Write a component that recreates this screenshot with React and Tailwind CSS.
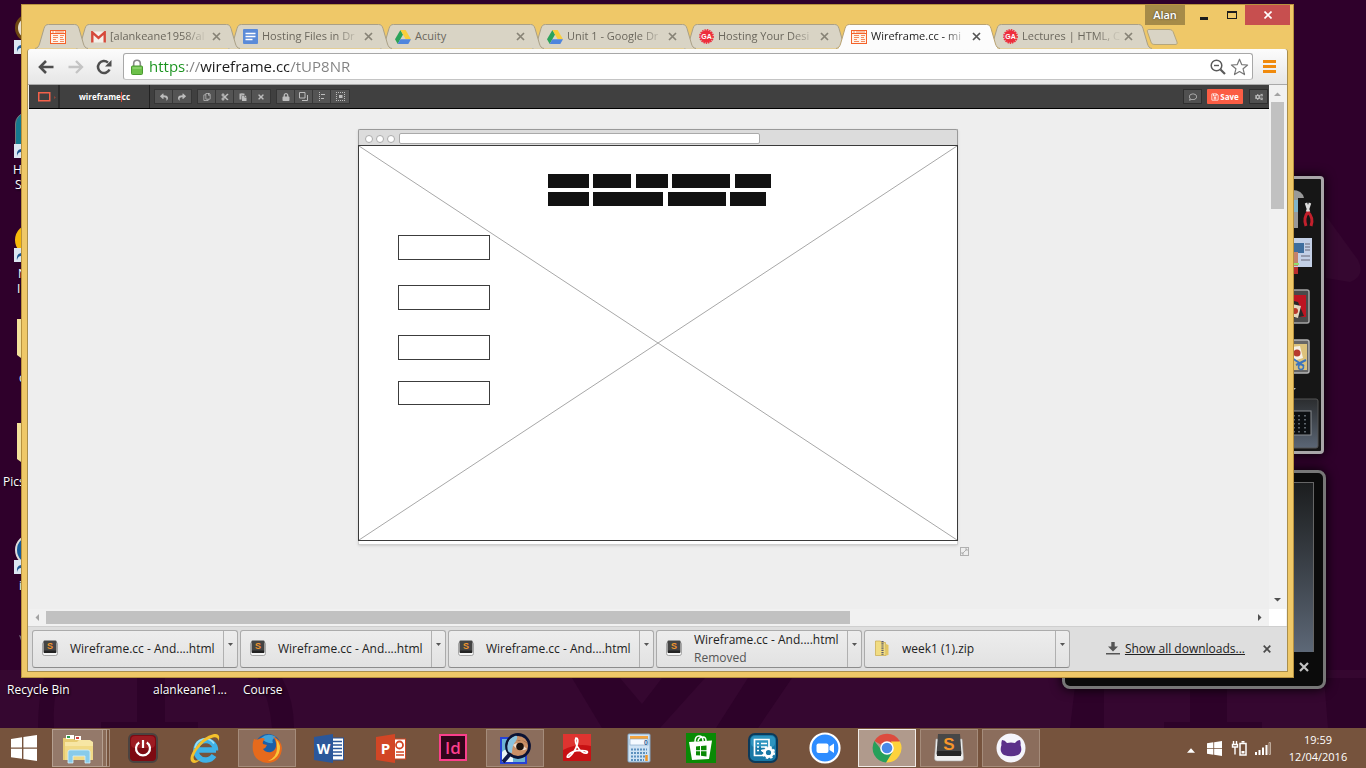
import React from "react";
import {
  FaReply, FaShare, FaRegCopy, FaCut, FaPaste, FaTimes, FaLock,
  FaRegComment, FaRegSave, FaCogs,
} from "react-icons/fa";

/* ---------- favicons ---------- */

function WireIcon() {
  return (
    <svg width="16" height="14" viewBox="0 0 16 14" className="shrink-0">
      <rect x="0.5" y="0.5" width="15" height="13" fill="#fff3ea" stroke="#f4622a" />
      <path d="M1 3.5H15" stroke="#f4622a" />
      <path d="M2 2h2M5 2h9" stroke="#f58a5c" />
      <path d="M3 5.500h5M3 7.500h5M3 9.500h3M3 11.500h5M10 5.500h4M10 7.500h3M10 9.500h4M10 11.500h4" stroke="#f58a5c" />
    </svg>
  );
}

function GmailIcon() {
  return (
    <svg width="15" height="12" viewBox="0 0 15 12" className="shrink-0">
      <rect x="1" y="0.5" width="13" height="11" fill="#f4f0ea" />
      <path d="M1.3 11.6V1.4L7.5 6.8 13.7 1.4V11.6" fill="none" stroke="#d64a3b" strokeWidth="2.4" />
    </svg>
  );
}

function DocsIcon() {
  return (
    <svg width="15" height="15" viewBox="0 0 15 15" className="shrink-0">
      <rect width="15" height="15" rx="1" fill="#5b8bd8" />
      <path d="M2.5 4.5h10M2.5 7.5h10M2.5 10.5h7" stroke="#fff" strokeWidth="1.4" />
    </svg>
  );
}

function DriveIcon() {
  return (
    <svg width="16" height="14" viewBox="0 0 16 14" className="shrink-0">
      <path d="M5.4 0L8 4.6 2.7 14 0 9.3Z" fill="#2ba35a" />
      <path d="M5.4 0H10.6L16 9.3H10.7Z" fill="#f9ce3c" />
      <path d="M5.4 9.3H16L13.3 14H2.7Z" fill="#4f85dd" />
    </svg>
  );
}

function GaIcon() {
  return (
    <svg width="15" height="15" viewBox="0 0 15 15" className="shrink-0">
      <circle cx="7.5" cy="7.5" r="6.2" fill="#ee2d3c" />
      <circle cx="7.5" cy="7.5" r="6.6" fill="none" stroke="#ee2d3c" strokeWidth="1.6" strokeDasharray="1.5 .9" />
      <text x="7.5" y="10" textAnchor="middle" fontSize="7" fontWeight="700" fill="#fff" fontFamily="Liberation Sans, sans-serif">GA</text>
    </svg>
  );
}

/* ---------- browser tabs ---------- */

const TABS = [
  { icon: <GmailIcon />, title: "[alankeane1958/al", z: "z-[7]" },
  { icon: <DocsIcon />, title: "Hosting Files in Dr", z: "z-[6]" },
  { icon: <DriveIcon />, title: "Acuity", z: "z-[5]" },
  { icon: <DriveIcon />, title: "Unit 1 - Google Dr", z: "z-[4]" },
  { icon: <GaIcon />, title: "Hosting Your Desi", z: "z-[3]" },
  { icon: <WireIcon />, title: "Wireframe.cc - mi", active: true, z: "z-10" },
  { icon: <GaIcon />, title: "Lectures | HTML, C", z: "z-[1]" },
];

function TabShape({ w, active }) {
  const d = `M0 24.5C3 24 3.500 22.500 4.500 20L9 4.500C10 1.500 11 0.500 13.500 0.500H${w - 13.5}C${w - 11} 0.500 ${w - 10} 1.500 ${w - 9} 4.500L${w - 4.5} 20C${w - 3.5} 22.500 ${w - 3} 24 ${w} 24.500`;
  return (
    <svg className="absolute inset-0" width={w} height="25" viewBox={`0 0 ${w} 25`}>
      <path d={d} fill={active ? "#fcfcfc" : "#d9d4c5"} stroke={active ? "#b9a271" : "#aaa086"} />
      {active && <path d={`M3 24.500H${w - 3}`} stroke="#fcfcfc" strokeWidth="2" />}
    </svg>
  );
}

function Tab({ icon, title, active, z }) {
  return (
    <div className={`relative h-[25px] w-41 -ml-3 shrink-0 ${z}`}>
      <TabShape w={164} active={active} />
      <div className="relative flex h-full items-center pl-[15px] pr-[19px]">
        {icon}
        <a
          href="#tab"
          className={`ml-1 min-w-0 flex-1 whitespace-nowrap text-[11px] ${title === "Acuity" ? "" : "[mask-image:linear-gradient(90deg,#000_75%,rgba(0,0,0,0.15)_96%)]"} ${active ? "text-[#222]" : "text-[#6b675d]"}`}
        >
          {title}
        </a>
        <button aria-label="Close tab" className="ml-1">
          <svg width="9" height="9" viewBox="0 0 9 9">
            <path d="M1 1L8 8M8 1L1 8" stroke={active ? "#555" : "#878376"} strokeWidth="1.7" />
          </svg>
        </button>
      </div>
    </div>
  );
}

function TitleBar() {
  return (
    <header className="relative flex h-[44px] items-end pl-[13px]">
      <div className="relative z-[8] flex h-[25px] w-[53px] shrink-0 items-center pl-[15px]">
        <TabShape w={53} />
        <a href="#pinned" aria-label="Wireframe" className="relative"><WireIcon /></a>
      </div>
      {TABS.map((t) => <Tab key={t.title} {...t} />)}
      <button aria-label="New tab" className="-ml-1.5 mb-1">
        <svg width="33" height="16" viewBox="0 0 33 16">
          <path d="M3 .5H23C26 .5 27 2 27.600 4L31 13C31.500 15 31 15.500 29 15.500H9C6 15.500 5.500 14.500 5 13L1.500 3C1 1 1.500 .5 3 .5Z" fill="#d9d4c5" stroke="#b5a67c" />
        </svg>
      </button>
      <div className="absolute right-[3px] top-0 flex h-5">
        <button className="w-10 bg-[#a68b48] text-[11px] font-semibold text-white [text-shadow:0_0_2px_#333]">Alan</button>
        <button aria-label="Minimize" className="flex w-[38px] items-end justify-center pb-[5px]"><span className="h-[3px] w-2 bg-[#1c1c1c]" /></button>
        <button aria-label="Maximize" className="flex w-[22px] items-center justify-start pl-1"><span className="h-2 w-2.5 border border-t-2 border-[#1c1c1c]" /></button>
        <button aria-label="Close" className="flex w-[45px] items-center justify-center bg-[#c74f4f]">
          <svg width="8" height="8" viewBox="0 0 8 8"><path d="M.5.5l7 7M7.500.5l-7 7" stroke="#fff" strokeWidth="1.6" /></svg>
        </button>
      </div>
    </header>
  );
}

function AddressBar() {
  return (
    <div className="flex h-9 items-center rounded-t-sm border-b border-[#a9a9a9] bg-linear-to-b from-[#fcfcfc] to-[#e6e6e6] pl-[10px] pr-[11px]">
      <button aria-label="Back">
        <svg width="17" height="16" viewBox="0 0 17 16"><path d="M15.500 8H3M8 2L2 8l6 6" fill="none" stroke="#4e4e4e" strokeWidth="2.600" /></svg>
      </button>
      <button aria-label="Forward" className="ml-3">
        <svg width="17" height="16" viewBox="0 0 17 16"><path d="M1.500 8H14M9 2l6 6-6 6" fill="none" stroke="#c4c4c4" strokeWidth="2.300" /></svg>
      </button>
      <button aria-label="Reload" className="ml-3">
        <svg width="16" height="16" viewBox="0 0 16 16"><path d="M13.500 10.500A6 6 0 1 1 12 3.600" fill="none" stroke="#4e4e4e" strokeWidth="2.500" /><path d="M15.500 1v6.500H9Z" fill="#4e4e4e" /></svg>
      </button>
      <div className="ml-[11px] flex h-[27px] flex-1 items-center rounded-[3px] border border-[#a8a8a8] border-b-[#c4c4c4] bg-white pl-[7px] pr-[3px]">
        <svg width="12" height="16" viewBox="0 0 12 16" className="shrink-0">
          <path d="M2.700 8V4.500a3.300 3.300 0 0 1 6.600 0V8" fill="none" stroke="#8b8b8b" strokeWidth="1.600" />
          <rect x=".5" y="7" width="11" height="8.500" rx="1" fill="#6cc04a" stroke="#4a9a30" />
          <path d="M1.500 9h9" stroke="#a5e088" />
        </svg>
        <input
          aria-label="Address"
          defaultValue="https://wireframe.cc/tUP8NR"
          className="ml-1.5 min-w-0 flex-1 bg-[linear-gradient(90deg,#17921c_36px,#808080_36px,#808080_51px,#1c1c1c_51px,#1c1c1c_140px,#808080_140px)] bg-clip-text text-[15px] text-transparent outline-none"
        />
        <button aria-label="Zoom">
          <svg width="16" height="16" viewBox="0 0 16 16" fill="none" stroke="#5a5a5a"><circle cx="6.500" cy="6.500" r="5.300" strokeWidth="1.500" /><path d="M4 6.500h5" strokeWidth="1.400" /><path d="M10.500 10.500L15 15" strokeWidth="2.200" /></svg>
        </button>
        <button aria-label="Bookmark" className="ml-1">
          <svg width="19" height="18" viewBox="0 0 19 18"><path d="M9.500 1.200l2.200 5.400 5.900.4-4.500 3.800 1.400 5.800-5-3.100-5 3.100 1.400-5.800L1.400 7l5.900-.4Z" fill="#fff" stroke="#777" strokeWidth="1.200" strokeLinejoin="round" /></svg>
        </button>
      </div>
      <button aria-label="Menu" className="ml-[10px] flex flex-col gap-[2px]">
        <span className="h-[3px] w-[13px] bg-[#f08a0c]" />
        <span className="h-[3px] w-[13px] bg-[#f08a0c]" />
        <span className="h-[3px] w-[13px] bg-[#f08a0c]" />
      </button>
    </div>
  );
}

/* ---------- wireframe.cc application ---------- */

function ToolGroup({ children }) {
  return <div className="flex divide-x divide-[#383838] border border-[#353535] bg-[#545454] text-[#bdbdbd]">{children}</div>;
}
function Tool({ label, children }) {
  return <button aria-label={label} className="flex h-[13px] w-[18px] items-center justify-center text-[8px]">{children}</button>;
}

function AppBar() {
  return (
    <div className="flex h-6 items-stretch border-b border-black bg-[#404040]">
      <button aria-label="Screen size" className="flex w-[31px] items-center border-r-2 border-[#2b2b2b] pl-[9px]">
        <svg width="19" height="10" viewBox="0 0 19 10"><rect x=".75" y=".75" width="11" height="8" fill="none" stroke="#f4614a" strokeWidth="1.500" /><path d="M16 4l2 1.500-2 1.500Z" fill="#8e4438" /></svg>
      </button>
      <a href="#home" className="flex w-[90px] items-center justify-center border-r border-[#222] text-[8px] font-bold text-white">
        wireframe<span className="h-2.5 w-px shrink-0 bg-[#e0503c]" />cc
      </a>
      <div className="flex items-center gap-[5px] pl-1">
        <ToolGroup>
          <Tool label="Undo"><FaReply /></Tool>
          <Tool label="Redo"><FaShare /></Tool>
        </ToolGroup>
        <ToolGroup>
          <Tool label="Copy"><FaRegCopy /></Tool>
          <Tool label="Cut"><FaCut /></Tool>
          <Tool label="Paste"><FaPaste /></Tool>
          <Tool label="Delete"><FaTimes /></Tool>
        </ToolGroup>
        <ToolGroup>
          <Tool label="Lock"><FaLock /></Tool>
          <Tool label="Arrange"><svg width="9" height="9" viewBox="0 0 9 9" fill="none" stroke="#bdbdbd"><path d="M.5.5h5.500v5.500H.5ZM8.500 3v5.500H3" /></svg></Tool>
          <Tool label="Align"><svg width="8" height="9" viewBox="0 0 8 9" stroke="#bdbdbd"><path d="M1.500 0v9" strokeDasharray="1 1" /><path d="M3 2.500h4M3 6.500h3" /></svg></Tool>
          <Tool label="Select all"><svg width="9" height="9" viewBox="0 0 9 9" fill="none" stroke="#bdbdbd"><path d="M0 .5h9M0 8.500h9M.5 0v9M8.500 0v9" strokeDasharray="1 1" /><path d="M3 3h3.500v3H3Z" fill="#bdbdbd" stroke="none" /></svg></Tool>
        </ToolGroup>
      </div>
      <div className="ml-auto flex items-center">
        <button aria-label="Comments" className="flex h-[15px] w-[19px] items-center justify-center border border-[#2e2e2e] bg-[#505050] text-[8px] text-[#bdbdbd]"><FaRegComment /></button>
        <button className="ml-[5px] flex h-[15px] w-9 items-center justify-center rounded-[1px] bg-[#fb5d44] text-[8px] font-bold text-white"><FaRegSave className="mr-px" />Save</button>
        <button aria-label="Settings" className="ml-[6px] mr-px flex h-[15px] w-[19px] items-center justify-center border border-[#2e2e2e] bg-[#505050] text-[8px] text-[#bdbdbd]"><FaCogs /></button>
      </div>
    </div>
  );
}

function Mockup() {
  return (
    <div className="relative h-[416px] w-[600px] shrink-0 border-x border-b border-[#d0d0d0] bg-white shadow-sm">
      <div className="-mx-px flex h-4 items-center rounded-t-[2px] border border-b-0 border-[#999] bg-[#dcdcdc] pl-1.5 pt-0.5">
        <span className="mr-[3px] size-2 rounded-full border border-[#aaa] bg-white" />
        <span className="mr-[3px] size-2 rounded-full border border-[#aaa] bg-white" />
        <span className="mr-1 size-2 rounded-full border border-[#aaa] bg-white" />
        <span className="h-[11px] w-[361px] rounded-[2px] border border-[#aaa] bg-white" />
      </div>
      <div className="relative -mx-px h-[396px] border border-[#3a3a3a] bg-white">
        <svg className="absolute inset-0 size-full" viewBox="0 0 598 394" preserveAspectRatio="none">
          <path d="M0 0L598 394M598 0L0 394" stroke="#a8a8a8" strokeWidth="1" />
        </svg>
        <div className="absolute left-[189px] top-[28px] flex flex-col gap-1">
          <div className="flex">
            <span className="h-3.5 w-[41px] bg-[#111]" />
            <span className="ml-1 h-3.5 w-[38px] bg-[#111]" />
            <span className="ml-[5px] h-3.5 w-8 bg-[#111]" />
            <span className="ml-1 h-3.5 w-[58px] bg-[#111]" />
            <span className="ml-[5px] h-3.5 w-9 bg-[#111]" />
          </div>
          <div className="flex">
            <span className="h-3.5 w-[41px] bg-[#111]" />
            <span className="ml-1 h-3.5 w-[70px] bg-[#111]" />
            <span className="ml-[5px] h-3.5 w-[58px] bg-[#111]" />
            <span className="ml-1 h-3.5 w-9 bg-[#111]" />
          </div>
        </div>
        <div className="absolute left-[39px] top-[89px] h-[25px] w-[92px] border border-[#3c3c3c] bg-white" />
        <div className="absolute left-[39px] top-[139px] h-[25px] w-[92px] border border-[#3c3c3c] bg-white" />
        <div className="absolute left-[39px] top-[189px] h-[25px] w-[92px] border border-[#3c3c3c] bg-white" />
        <div className="absolute left-[39px] top-[235px] h-[24px] w-[92px] border border-[#3c3c3c] bg-white" />
      </div>
      <svg className="absolute -bottom-3 -right-3" width="9" height="9" viewBox="0 0 9 9" fill="none" stroke="#b0b0b0">
        <rect x=".5" y=".5" width="8" height="8" /><path d="M2 7L7 2M5 2h2v2M2 5v2h2" />
      </svg>
    </div>
  );
}

function Viewport() {
  return (
    <div className="mx-px flex min-h-0 flex-1">
      <div className="flex min-w-0 flex-1 flex-col">
        <AppBar />
        <main className="flex min-h-0 flex-1 justify-center overflow-hidden bg-[#eee] pl-[18px] pt-5">
          <Mockup />
        </main>
        <div className="flex h-[17px] items-center bg-[#f1f1f1]">
          <svg width="17" height="17" viewBox="0 0 17 17"><path d="M10 5v7L6.500 8.500Z" fill="#a3a3a3" /></svg>
          <div className="flex-1"><div className="h-[13px] w-[66.800%] bg-[#c1c1c1]" /></div>
          <svg width="19" height="17" viewBox="0 0 19 17"><path d="M8 5v7L11.500 8.500Z" fill="#505050" /></svg>
        </div>
      </div>
      <div className="flex w-[17px] flex-col bg-white">
        <div className="flex flex-1 flex-col items-center bg-[#f1f1f1]">
          <svg width="17" height="17" viewBox="0 0 17 17"><path d="M5 11h7L8.500 7.500Z" fill="#a3a3a3" /></svg>
          <div className="h-[107px] w-[13px] bg-[#c1c1c1]" />
          <svg className="mt-auto" width="17" height="17" viewBox="0 0 17 17"><path d="M5 6h7L8.500 9.500Z" fill="#505050" /></svg>
        </div>
        <div className="h-[17px]" />
      </div>
    </div>
  );
}

/* ---------- downloads ---------- */

function SublimeFile() {
  return (
    <svg width="16" height="16" viewBox="0 0 16 16" className="shrink-0">
      <rect x=".5" y="2" width="15" height="13.500" rx="2" fill="#f4f4f4" stroke="#888" strokeWidth=".7" />
      <rect x="1.500" y=".5" width="13" height="12.500" rx="1" fill="#444" />
      <path d="M2 10.500h12V13H2Z" fill="#222" />
      <text x="8" y="9" textAnchor="middle" fontSize="9" fontWeight="700" fill="#f2962e" fontFamily="Liberation Sans, sans-serif">S</text>
    </svg>
  );
}

function ZipFile() {
  return (
    <svg width="16" height="16" viewBox="0 0 16 16" className="shrink-0">
      <path d="M1.500 1h5l1 1.500h4l.5 13H1.500Z" fill="#f1dc82" stroke="#c9a94a" strokeWidth=".7" />
      <path d="M12 4l2.500 1v10L12 15.500Z" fill="#e3c662" />
      <path d="M8.500 1v14" stroke="#5a5a6a" strokeWidth="2.200" strokeDasharray="1.200 1" />
    </svg>
  );
}

function Download({ name, note, zip }) {
  return (
    <div className="flex h-[38px] w-[206px] rounded-[3px] border border-[#ababab] border-b-[#8c8c8c] bg-linear-to-b from-[#ededed] to-[#e2e2e2]">
      <button className="flex min-w-0 flex-1 items-center pl-[9px] text-left">
        <span className="-mt-0.5">{zip ? <ZipFile /> : <SublimeFile />}</span>
        <span className="ml-3 whitespace-nowrap text-xs leading-[18px] text-[#222]">
          {name}
          {note && <span className="block text-[#555]">{note}</span>}
        </span>
      </button>
      <button aria-label="Download options" className="flex w-[14px] justify-center border-l border-[#b0b0b0] pt-3">
        <svg width="5" height="3" viewBox="0 0 5 3"><path d="M0 0h5L2.500 3Z" fill="#555" /></svg>
      </button>
    </div>
  );
}

function DownloadShelf() {
  return (
    <footer className="flex h-[45px] items-center gap-[2px] border-t border-[#cfcfcf] bg-[#dedede] pb-[1px] pl-1">
      <Download name="Wireframe.cc - And....html" />
      <Download name="Wireframe.cc - And....html" />
      <Download name="Wireframe.cc - And....html" />
      <Download name="Wireframe.cc - And....html" note="Removed" />
      <Download name="week1 (1).zip" zip />
      <a href="#downloads" className="ml-auto flex items-center gap-[5px] whitespace-nowrap text-xs text-[#222]">
        <svg width="14" height="13" viewBox="0 0 14 13"><path d="M5.300 0h3.400v4.500H12L7 9.500 2 4.500h3.300ZM0 11h14v1.500H0Z" fill="#555" /></svg>
        <span className="underline">Show all downloads...</span>
      </a>
      <button aria-label="Close downloads" className="ml-4 mr-4">
        <svg width="8" height="8" viewBox="0 0 8 8"><path d="M.7.7l6.600 6.600M7.300.7L.7 7.300" stroke="#4a4a4a" strokeWidth="1.700" /></svg>
      </button>
    </footer>
  );
}

function BrowserWindow() {
  return (
    <section className="absolute bottom-[50px] left-[21px] right-[72px] top-1 flex flex-col border border-[#b8923f] bg-[#efc868]">
      <TitleBar />
      <div className="mx-[5px] mb-[5px] flex min-h-0 flex-1 flex-col rounded-t-[3px] border border-t-0 border-[#a98e4c] bg-[#f0f0f0]">
        <AddressBar />
        <Viewport />
        <DownloadShelf />
      </div>
    </section>
  );
}

/* ---------- desktop ---------- */

function Wallpaper() {
  return (
    <svg className="absolute inset-0 size-full" viewBox="0 0 1366 728" preserveAspectRatio="none">
      <rect width="1366" height="728" fill="#2f002b" />
      <rect y="670" width="1366" height="58" fill="#350730" />
      <g fill="#2d0229">
        <path d="M38 728Q38 700 44 678H60Q52 700 54 728Z" />
        <path d="M137 678H165V722H198V728H101V722H137Z" />
        <path d="M258 678H282Q294 700 294 728H272Q270 700 258 678Z" />
        <path d="M572 678H620L642 704 662 678H705L660 728H602Z" />
        <path d="M748 678H792L758 728H716Z" />
        <path d="M1076 678H1104V728H1070Z" />
        <path d="M1190 678H1227V722H1262V728H1164V722H1190Z" />
        <path d="M1324 678H1366V728H1328Z" />
      </g>
      <path d="M1326 216L1358 260Q1366 276 1350 282L1326 278Z" fill="#350730" />
    </svg>
  );
}

function ShortcutBadge({ className }) {
  return (
    <svg className={className} width="14" height="14" viewBox="0 0 14 14">
      <rect width="14" height="14" fill="#dbe6f2" /><path d="M3 12Q2 6 7 5V2l5 5-5 5V8Q4 8 3 12Z" fill="#1c5592" />
    </svg>
  );
}

function DesktopIcons() {
  return (
    <div className="absolute inset-0 text-xs leading-4 text-white [text-shadow:1px_1px_2px_#000]">
      <span className="absolute left-[15px] top-[14px] size-7 rounded-full border-3 border-[#6d4611] bg-[#e8e0d0]" />
      <ShortcutBadge className="absolute left-[14px] top-10" />
      <span className="absolute left-[15px] top-[112px] h-10 w-8 rounded-tl-xl border border-[#777] bg-[#15798f]" />
      <ShortcutBadge className="absolute left-[14px] top-36" />
      <span className="absolute left-[13px] top-[162px]">H</span>
      <span className="absolute left-[15px] top-[177px]">S</span>
      <span className="absolute left-[15px] top-[224px] size-8 rounded-full bg-[#f6b90b]" />
      <ShortcutBadge className="absolute left-[14px] top-62" />
      <span className="absolute left-[18px] top-[266px]">N</span>
      <span className="absolute left-[17px] top-[281px]">I</span>
      <svg className="absolute left-[17px] top-[319px]" width="8" height="42" viewBox="0 0 8 42"><path d="M0 0H8V42L0 36Z" fill="#f3e19a" /></svg>
      <span className="absolute left-[19px] top-[370px]">c</span>
      <svg className="absolute left-[17px] top-[423px]" width="8" height="42" viewBox="0 0 8 42"><path d="M0 0H8V42L0 36Z" fill="#f3e19a" /></svg>
      <span className="absolute left-[3px] top-[474px]">Pics</span>
      <span className="absolute left-[15px] top-[534px] size-8 rounded-full border-2 border-[#ddd] bg-[#165b9c]" />
      <ShortcutBadge className="absolute left-[14px] top-140" />
      <span className="absolute left-[19px] top-[578px]">i</span>
      <svg className="absolute left-[18px] top-[634px]" width="6" height="14" viewBox="0 0 6 14"><path d="M1 1L5 3V12Z" fill="#777080" /></svg>
      <span className="absolute left-[7px] top-[682px]">Recycle Bin</span>
      <span className="absolute left-[153px] top-[682px]">alankeane1...</span>
      <span className="absolute left-[243px] top-[682px]">Course</span>
    </div>
  );
}

function Gadgets() {
  return (
    <>
      <div className="absolute right-[42px] top-[176px] h-[278px] w-[90px] rounded-[4px] border-3 border-[#a8a5a8] bg-[#161616] shadow-[0_0_12px_#000]">
        <svg className="absolute right-0 top-0" width="40" height="272" viewBox="1281 179 40 272">
          <path d="M1290 190Q1302 189 1304 198H1298V228H1294V205H1290Z" fill="#999" />
          <rect x="1292" y="200" width="6" height="12" fill="#7fb4c8" />
          <path d="M1306 203l3 9M1310 203l-3 9" stroke="#ddd" strokeWidth="2.500" />
          <path d="M1308 212Q1303 218 1306 226M1308 212Q1314 218 1311 226" fill="none" stroke="#c3202c" strokeWidth="3" />
          <rect x="1290" y="238" width="22" height="29" fill="#c3d0e6" />
          <rect x="1290" y="243" width="14" height="10" fill="#3f6e9d" />
          <path d="M1305 244h5M1305 247h5M1305 250h5M1301 256h9M1301 260h9" stroke="#667" />
          <rect x="1290" y="252" width="8" height="14" fill="#c4826c" />
          <path d="M1290 264h9" stroke="#91e070" strokeWidth="2" />
          <rect x="1290" y="267" width="8" height="7" fill="#b92d2d" />
          <rect x="1284" y="290" width="25" height="33" rx="2" fill="#4a4a4a" stroke="#a5a5a5" strokeWidth="1.500" />
          <path d="M1290 295h16v22h-16Z" fill="#bd1522" />
          <path d="M1290 300l8 2 6 14-14 3Z" fill="#282828" />
          <path d="M1292 304l9 2-3 12-8-2Z" fill="#e3d6c0" /><circle cx="1295" cy="311" r="3" fill="#b93a2a" />
          <rect x="1284" y="340" width="25" height="33" rx="2" fill="#666" stroke="#b5b5b5" strokeWidth="1.500" />
          <path d="M1290 344h17v26h-17Z" fill="#dcc27c" />
          <path d="M1291 347l9-1 3 12-10 3Z" fill="#f5f0e4" /><circle cx="1297" cy="353" r="3.500" fill="#b63a2e" />
          <path d="M1292 358l12 8M1306 360l-10 5" stroke="#3c74bd" strokeWidth="2" />
          <circle cx="1301" cy="367" r="2.500" fill="none" stroke="#3c74bd" strokeWidth="1.500" />
          <path d="M1293 388h3l-2 2Z" fill="#bbb" />
          <linearGradient id="pad" x1="0" x2="0" y1="0" y2="1"><stop stopColor="#2b2d2f" /><stop offset="1" stopColor="#5b6675" /></linearGradient>
          <rect x="1280" y="399" width="38" height="49" rx="2" fill="url(#pad)" stroke="#555" />
          <rect x="1286" y="411" width="25" height="24" fill="#0c0f12" stroke="#8a8e92" />
          <path d="M1294 415v18M1299 415v18M1305 415v18" stroke="#78828a" strokeWidth="1.500" strokeDasharray="1.500 2.500" />
        </svg>
      </div>
      <div className="absolute right-10 top-[470px] h-[219px] w-[264px] rounded-lg border-3 border-[#777] bg-[#0b0b0b] pr-[9px] pt-[9px] shadow-[0_0_12px_#000]">
        <div className="h-[170px] border-r border-t border-[#666] bg-linear-to-b from-[#1c1e1f] to-[#5d6877]" />
        <button aria-label="Close gadget" className="mt-[10px] ml-auto mr-[5px] block">
          <svg width="10" height="10" viewBox="0 0 10 10"><path d="M1 1l8 8M9 1L1 9" stroke="#c4c4c4" strokeWidth="2.200" /></svg>
        </button>
      </div>
    </>
  );
}

/* ---------- taskbar ---------- */

const Svg = ({ children, vb = "0 0 32 32" }) => <svg width="32" height="32" viewBox={vb}>{children}</svg>;

function WinLogo({ size }) {
  return (
    <svg width={size} height={size} viewBox="0 0 26 26">
      <path d="M0 4L11 2.300V12.400H0ZM12.400 2.100L26 0V12.400H12.400ZM0 13.700H11V23.700L0 22.200ZM12.400 13.700H26V26L12.400 24Z" fill="#fff" />
    </svg>
  );
}

const sans = "Open Sans, sans-serif";

const APPS = [
  { label: "Power", icon: <Svg>
    <rect x="2" y="2" width="28" height="28" rx="5" fill="#7d0a12" stroke="#4b4340" strokeWidth="2" />
    <rect x="4" y="4" width="24" height="12" rx="4" fill="#9c1b22" />
    <path d="M12.200 10.500A7 7 0 1 0 19.800 10.500" fill="none" stroke="#fff" strokeWidth="2.200" /><path d="M16 8v8" stroke="#fff" strokeWidth="2.200" />
  </Svg> },
  { label: "Internet Explorer", icon: <Svg>
    <path d="M8 18H27M26.500 18.500A9.800 9.800 0 1 0 25 23.500" fill="none" stroke="#3fb2e8" strokeWidth="5.500" />
    <path d="M6 16A10.500 10.500 0 0 1 25 11.500" fill="none" stroke="#9ae0fb" strokeWidth="1.800" />
    <path d="M5 31Q-2 29 5 17.500Q14 4 25 2Q32 1 29.500 9Q29 4.500 24 5.500Q15 8 8 18Q2 27 6.500 28.500Q9 29 12 27Q8 31 5 31Z" fill="#f4c02c" />
  </Svg> },
  { label: "Firefox", open: true, icon: <Svg>
    <circle cx="17" cy="15" r="13" fill="#1d5fa6" /><path d="M10 6Q17 0 25 5Q20 7 22 11Q15 12 10 6Z" fill="#3fa2da" />
    <path d="M3 7Q5 8 8 7Q11 5 14 7Q11 9 12 12L16 13Q15 16 12 17Q15 21 20 20Q26 18 25 11Q24 6 21 4Q30 7 31 16Q30 30 17 31Q4 30 2 19Q1 12 3 7Z" fill="#e66a1c" />
    <path d="M25 7Q31 13 28 21Q25 28 17 29Q26 25 26 16Q26 11 25 7Z" fill="#fbc539" />
  </Svg> },
  { label: "Word", icon: <Svg>
    <rect x="17" y="6" width="13.500" height="22" fill="#fff" stroke="#2b579a" /><path d="M19 9.500h10M19 13h10M19 16.500h10M19 20h10M19 23.500h10" stroke="#2b579a" strokeWidth="1.500" />
    <path d="M1 5L20 2V31L1 28Z" fill="#2b579a" /><text x="10.500" y="21.500" textAnchor="middle" fontSize="14" fontWeight="700" fill="#fff" fontFamily={sans}>W</text>
  </Svg> },
  { label: "PowerPoint", icon: <Svg>
    <rect x="17" y="7" width="13.500" height="20" fill="#fff" stroke="#d24625" /><circle cx="24.500" cy="13" r="3.500" fill="none" stroke="#d24625" strokeWidth="1.800" /><path d="M21 20h8M21 23h8" stroke="#d24625" strokeWidth="1.500" />
    <path d="M1 5L20 2V31L1 28Z" fill="#d24625" /><text x="10.500" y="22" textAnchor="middle" fontSize="15" fontWeight="700" fill="#fff" fontFamily={sans}>P</text>
  </Svg> },
  { label: "InDesign", icon: <Svg>
    <rect x="3" y="3" width="26" height="25" fill="#31051b" stroke="#fb3f8c" strokeWidth="2" /><text x="16" y="22" textAnchor="middle" fontSize="17" fontWeight="600" fill="#fb3f8c" fontFamily={sans}>Id</text>
  </Svg> },
  { label: "Photo viewer", open: true, icon: <Svg>
    <rect x="2" y="6" width="25" height="25" fill="#6db4d4" stroke="#2742d6" strokeWidth="2" /><path d="M3 20Q8 14 14 24V30H3Z" fill="#e9f3f6" />
    <circle cx="19" cy="14" r="11.500" fill="#c98f66" stroke="#0a1234" strokeWidth="2.800" />
    <path d="M9 19Q6 8 16 4Q20 3 17 9Q13 13 13 21Q10 21 9 19Z" fill="#8cc3de" /><path d="M16 9Q22 6 29 12Q26 8 19 8Z" fill="#6b3f28" />
    <path d="M14 13Q19 8 28 17Q20 21 14 13Z" fill="#f0dccb" /><circle cx="21" cy="14.500" r="3.800" fill="#1c120e" /><path d="M10.500 22.500L4 30" stroke="#101a4a" strokeWidth="4" />
  </Svg> },
  { label: "Acrobat Reader", icon: <Svg>
    <rect x="2" y="2" width="28" height="27" fill="#c81114" /><path d="M2 2H30V14Q16 11 2 18Z" fill="#df3430" />
    <path d="M15 6Q18 6 16 13Q14 20 8 25Q5 26 7 23Q12 18 21 18.500Q28 19 26 21Q22 22 18 17Q13 10 15 6Z" fill="none" stroke="#fff" strokeWidth="1.700" />
  </Svg> },
  { label: "Calculator", icon: <Svg>
    <rect x="5" y="2" width="22" height="28" rx="1" fill="#cfe3f4" stroke="#83a8c8" /><rect x="7" y="4" width="18" height="3" fill="#f3a53f" /><rect x="7" y="7" width="18" height="6" fill="#f5faff" stroke="#7ca2c4" strokeWidth=".6" />
    <text x="21" y="12.500" fontSize="6.500" fontWeight="700" fill="#38689a" fontFamily={sans}>0</text>
    <path d="M8 17.500H24M8 21H24M8 24.500H24M8 28H21" stroke="#5c90bd" strokeWidth="2" strokeDasharray="2 1" /><path d="M23.500 23v6" stroke="#ee9429" strokeWidth="2.500" />
  </Svg> },
  { label: "Store", icon: <Svg>
    <rect x="1" y="1" width="30" height="30" fill="#0a8a05" /><path d="M4 10L27 8.500 24 27 7 28Z" fill="#fff" /><path d="M10 10Q10 4 14 4Q18 4 18 9M13 9Q14 5 18 5Q21 5 21 9" fill="none" stroke="#fff" strokeWidth="1.500" />
    <path d="M11 14.500l4-.4v4.200h-4ZM16 14l5.500-.6v4.900H16ZM11 19.300h4v4.300l-4-.4ZM16 19.300h5.500v5.200L16 23.800Z" fill="#0a8a05" />
  </Svg> },
  { label: "System manager", icon: <Svg>
    <rect x="2" y="2" width="28" height="28" rx="6" fill="#1878a6" stroke="#0c3a5a" strokeWidth="2" /><rect x="4" y="4" width="24" height="11" rx="4" fill="#2e94bf" />
    <path d="M7.500 7.500H22V23.500H7.500ZM10 11.500h2M14 11.500h6M10 15h2M14 15h5M10 18.500h2M14 18.500h3" fill="none" stroke="#fff" strokeWidth="1.700" />
    <circle cx="21.500" cy="20.500" r="4" fill="#1878a6" stroke="#fff" strokeWidth="2.800" /><circle cx="21.500" cy="20.500" r="5.700" fill="none" stroke="#fff" strokeWidth="1.800" strokeDasharray="2.500 2" />
  </Svg> },
  { label: "Zoom", icon: <Svg>
    <circle cx="16" cy="16" r="14.500" fill="#2d8cff" stroke="#fff" strokeWidth="2.200" /><rect x="7.500" y="11.500" width="12" height="9.500" rx="2" fill="#fff" /><path d="M20.500 14.500L25 11.500V21L20.500 18Z" fill="#fff" />
  </Svg> },
  { label: "Chrome", active: true, icon: <Svg>
    <path d="M16 16L3.400 9A14.500 14.500 0 0 1 28.600 9Z" fill="#dd4b3e" /><path d="M28.600 9A14.500 14.500 0 0 1 15 30.500L22 19 20 9Z" fill="#fdd23c" /><path d="M3.400 9A14.500 14.500 0 0 0 15 30.500L21.500 20 12 20Z" fill="#26a05a" />
    <path d="M16 9H28.600" stroke="#dd4b3e" strokeWidth="1" /><circle cx="16" cy="16" r="6.800" fill="#fff" /><circle cx="16" cy="16" r="5.300" fill="#4a89e8" />
  </Svg> },
  { label: "Sublime Text", open: true, icon: <Svg>
    <path d="M3 7L1.500 26Q1.500 29 4 29H28Q30.500 29 30.500 26L29 7Z" fill="#efefef" stroke="#aaa" strokeWidth=".6" /><path d="M5 2H27L28.500 22Q28 24 26 24H6Q4 24 3.500 22Z" fill="#474747" /><path d="M4 19H28V24H4Z" fill="#262626" />
    <text x="16" y="17.500" textAnchor="middle" fontSize="17" fontWeight="700" fill="#f6952b" fontFamily="Liberation Sans, sans-serif">S</text>
  </Svg> },
  { label: "GitHub Desktop", open: true, icon: <Svg>
    <circle cx="16" cy="16" r="14.500" fill="#f5f5fb" /><path d="M7 8Q10 8 12 11Q16 10 20 11Q22 8 25 8Q26 11 25.500 13Q28 20 23 23Q16 25.500 9 23Q4 20 6.500 13Q6 11 7 8Z" fill="#5b3089" />
  </Svg> },
];

function Taskbar() {
  return (
    <nav className="relative flex h-10 shrink-0 items-stretch gap-1 bg-[#76533d]">
      <button aria-label="Start" className="flex w-12 items-center justify-center"><WinLogo size={26} /></button>
      <button aria-label="File Explorer" className="flex w-[58px] py-px">
        <span className="flex h-full w-[51px] items-center justify-center border border-[#b5a091] bg-[#94796a]">
          <Svg>
            <path d="M1 6H11L13 8H25V28H1Z" fill="#e7cc72" /><path d="M4 3h8v4H4Z" fill="#fff" /><path d="M5 4h3v2H5Z" fill="#2d9b4a" /><path d="M13 4h6v4h-6Z" fill="#fff" /><path d="M14 5h3v2h-3Z" fill="#d5403b" />
            <path d="M3 10H15L17 8H28L31 10V28H3Z" fill="#f7e6a4" /><path d="M3 14H31V28H3Z" fill="#f1da86" />
            <path d="M6 20Q6 18 8 18H26Q28 18 28 20V31H23V24H11V31H6Z" fill="#88cbea" stroke="#d6f0fb" strokeWidth=".8" />
          </Svg>
        </span>
        <span className="h-full w-1 border-y border-r border-[#b5a091] bg-[#8a6b58]" />
        <span className="h-full w-[3px] border-y border-r border-[#a58c7b]" />
      </button>
      {APPS.map((a) => (
        <button
          key={a.label}
          aria-label={a.label}
          className={`my-px flex w-[58px] items-center justify-center border ${a.active ? "border-[#f0ebe7] bg-[#b09a8c]" : a.open ? "border-[#a58c7b] bg-[#8b6d5c]" : "border-transparent"}`}
        >
          {a.icon}
        </button>
      ))}
      <div className="ml-auto flex items-center text-white">
        <button aria-label="Show hidden icons"><svg className="mt-1" width="8" height="5" viewBox="0 0 9 5"><path d="M0 5L4.500 0 9 5Z" fill="#fff" /></svg></button>
        <span className="ml-3"><WinLogo size={15} /></span>
        <svg className="ml-[9px]" width="16" height="16" viewBox="0 0 16 16" fill="none" stroke="#fff">
          <path d="M2.500 1v3M5.500 1v3M1.500 4.500h5v2.500h-5ZM4 7v7.500" strokeWidth="1.400" /><path d="M9 3.500h6v11.500H9ZM10.500 1.800h3" strokeWidth="1.500" /><path d="M10.500 11h3v2.500h-3Z" fill="#fff" stroke="none" />
        </svg>
        <svg className="ml-2" width="16" height="13" viewBox="0 0 16 13" fill="#fff">
          <path d="M0 10h2v3H0ZM3.500 8h2v5h-2ZM7 5.500h2V13H7ZM10.500 3h2v10h-2Z" /><path d="M14 .5h1.500V12.500H14Z" fill="none" stroke="#bda999" />
        </svg>
        <time className="mr-4 ml-[15px] w-[64px] text-center text-[11px] leading-[17px] whitespace-nowrap">
          <span className="block">19:59</span>
          <span className="block">12/04/2016</span>
        </time>
      </div>
    </nav>
  );
}

export default function App() {
  return (
    <div className="flex h-screen min-h-[640px] flex-col overflow-hidden font-['Open_Sans','Noto_Sans',sans-serif]">
      <div className="relative min-h-0 flex-1">
        <Wallpaper />
        <DesktopIcons />
        <Gadgets />
        <BrowserWindow />
      </div>
      <Taskbar />
    </div>
  );
}
